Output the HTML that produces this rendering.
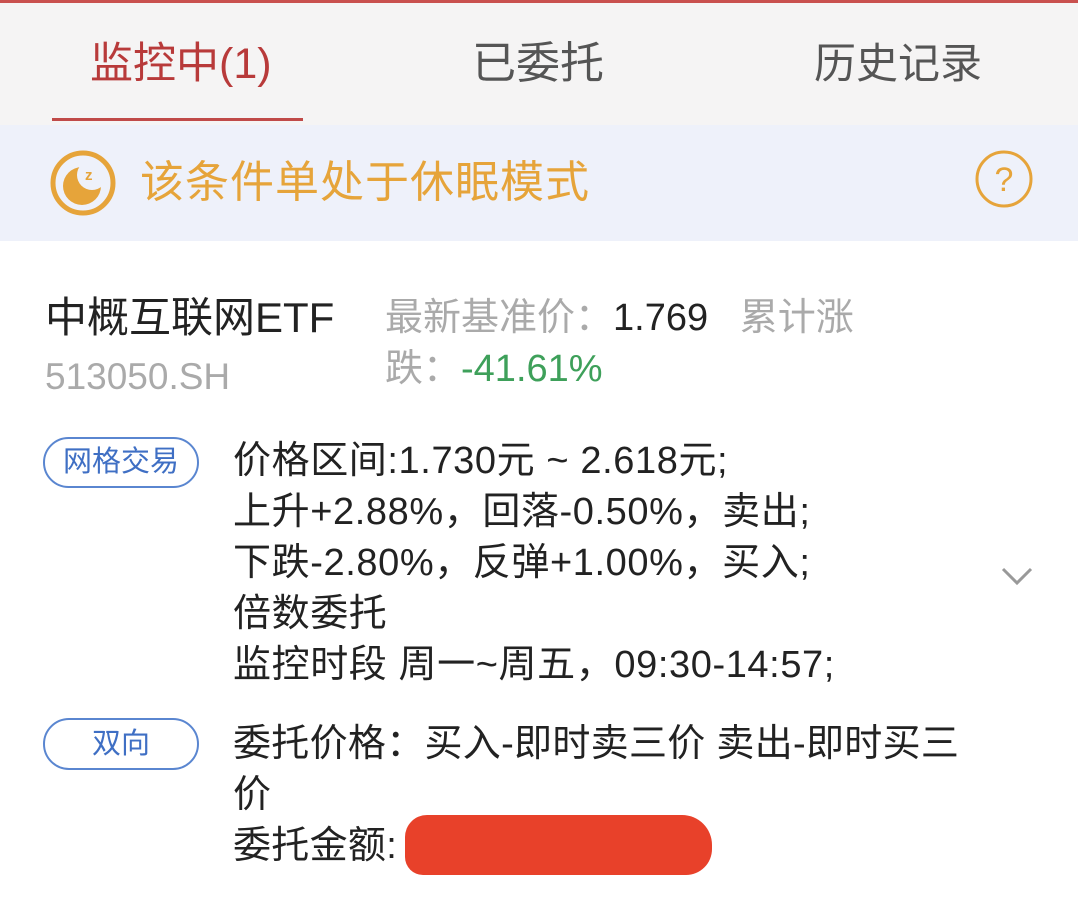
<!DOCTYPE html>
<html><head><meta charset="utf-8"><style>
*{margin:0;padding:0;box-sizing:border-box}
body{width:1078px;height:904px;background:#fff;font-family:"Liberation Sans","Noto Sans CJK SC",sans-serif;position:relative;overflow:hidden}
.a{position:absolute;white-space:nowrap}
</style></head><body>
<div class="a" style="left:0;top:0;width:1078px;height:125px;background:#f5f4f4;border-top:3px solid #c9504e"></div>
<div class="a" style="left:90px;top:38px;font-size:43px;color:#b83a3a;line-height:52px">监控中(1)</div>
<div class="a" style="left:472px;top:38px;font-size:44px;color:#555;line-height:52px">已委托</div>
<div class="a" style="left:814px;top:38px;font-size:42px;color:#555;line-height:52px">历史记录</div>
<div class="a" style="left:52px;top:118px;width:251px;height:3px;background:#c04a48"></div>
<div class="a" style="left:0;top:125px;width:1078px;height:116px;background:#eef1fa"></div>
<svg class="a" style="left:48px;top:148px" width="70" height="70" viewBox="0 0 70 70"><circle cx="35" cy="35" r="30" fill="none" stroke="#e6a43a" stroke-width="5"/><circle cx="34" cy="38" r="19" fill="#e6a43a"/><circle cx="44" cy="27" r="15" fill="#eef1fa"/><text x="37" y="32" font-size="15" font-weight="bold" fill="#e6a43a" font-family="Liberation Sans">z</text></svg>
<div class="a" style="left:140px;top:156px;font-size:44px;color:#e6a43a;line-height:54px;letter-spacing:1px">该条件单处于休眠模式</div>
<svg class="a" style="left:974px;top:149px" width="60" height="60" viewBox="0 0 60 60"><circle cx="30" cy="30" r="27" fill="none" stroke="#e6a43a" stroke-width="3"/><text x="30" y="42" text-anchor="middle" font-size="34" fill="#e6a43a" font-family="Liberation Sans">?</text></svg>
<div class="a" style="left:45px;top:293px;font-size:42px;color:#222;line-height:50px">中概互联网ETF</div>
<div class="a" style="left:45px;top:354px;font-size:37px;color:#aaa;line-height:46px">513050.SH</div>
<div class="a" style="left:385px;top:294px;font-size:38px;color:#aaa;line-height:48px">最新基准价：<span style="color:#222">1.769</span>&nbsp;&nbsp;&nbsp;累计涨</div>
<div class="a" style="left:385px;top:345px;font-size:38px;color:#aaa;line-height:48px">跌：<span style="color:#3ea05a">-41.61%</span></div>
<div class="a" style="left:43px;top:437px;width:156px;height:51px;border:2px solid #5a86d0;border-radius:26px;text-align:center;font-size:29px;color:#3f6fc4;line-height:47px">网格交易</div>
<div class="a" style="left:43px;top:718px;width:156px;height:52px;border:2px solid #5a86d0;border-radius:26px;text-align:center;font-size:29px;color:#3f6fc4;line-height:48px">双向</div>
<div class="a" style="left:233px;top:436px;font-size:38px;color:#222;line-height:51px;letter-spacing:0.6px">价格区间:1.730元 ~ 2.618元;<br>上升+2.88%，回落-0.50%，卖出;<br>下跌-2.80%，反弹+1.00%，买入;<br>倍数委托<br>监控时段 周一~周五，09:30-14:57;</div>
<div class="a" style="left:233px;top:719px;font-size:38px;color:#222;line-height:51px;letter-spacing:0.3px">委托价格：买入-即时卖三价 卖出-即时买三<br>价<br>委托金额:</div>
<svg class="a" style="left:1000px;top:565px" width="34" height="22" viewBox="0 0 34 22"><path d="M3 4 L17 18 L31 4" fill="none" stroke="#999" stroke-width="3"/></svg>
<div class="a" style="left:405px;top:815px;width:307px;height:60px;background:#e8412a;border-radius:22px 30px 26px 18px"></div>
</body></html>
